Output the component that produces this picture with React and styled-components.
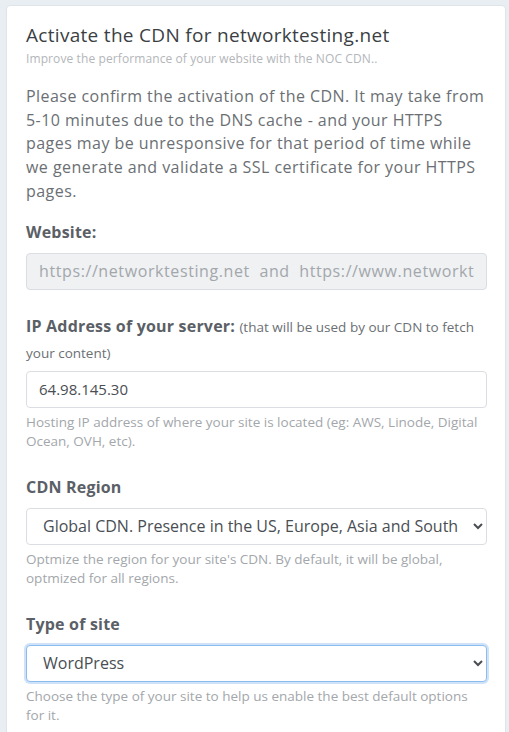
import React from "react";
import styled, { createGlobalStyle } from "styled-components";

const GlobalStyle = createGlobalStyle`
  body {
    margin: 0;
    background: #e9eef2;
    font-family: "Open Sans", "Liberation Sans", sans-serif;
  }
`;

const Page = styled.div`
  padding: 5px 3px 0 6px;
  height: 732px;
  box-sizing: border-box;
  overflow: hidden;
`;

const Card = styled.div`
  background: #fff;
  border: 1px solid #dfe4e8;
  border-radius: 4px;
  padding: 15px 18px 20px 19px;
  min-height: 760px;
`;

const Title = styled.h2`
  margin: 0;
  font-size: 19px;
  font-weight: 400;
  letter-spacing: 0.3px;
  color: #3b3f44;
  line-height: 28px;
`;

const Subtitle = styled.div`
  font-size: 12px;
  letter-spacing: 0.1px;
  color: #b3b6ba;
  line-height: 20px;
  margin-bottom: 16px;
`;

const Intro = styled.p`
  margin: 0 0 16px;
  font-size: 16px;
  letter-spacing: 0.45px;
  line-height: 23.7px;
  color: #6b6f74;
`;

const NoWrap = styled.span`
  white-space: nowrap;
`;

const Field = styled.div`
  margin-bottom: 24px;
`;

const Label = styled.label`
  display: block;
  font-size: 16px;
  font-weight: 700;
  letter-spacing: 0.2px;
  color: #5b6067;
  line-height: ${(p) => (p.tight ? 25 : 24)}px;
  margin-bottom: ${(p) => (p.tight ? 5 : 9)}px;
`;

const LabelNote = styled.span`
  font-size: 13.5px;
  font-weight: 400;
  letter-spacing: 0;
  color: #6b6f74;
`;

const Input = styled.input`
  display: block;
  width: 100%;
  box-sizing: border-box;
  height: 37px;
  padding: 0 12px;
  font-family: inherit;
  font-size: ${(p) => p.size || 15}px;
  letter-spacing: ${(p) => p.spacing || 0}px;
  color: #4a4e53;
  background: #fff;
  border: 1px solid #dadde1;
  border-radius: 4px;
  outline: none;
  &:disabled {
    background: #eff1f3;
    -webkit-text-fill-color: #a3a7ab;
    color: #a3a7ab;
    opacity: 1;
  }
`;

const Select = styled.select`
  display: block;
  width: 100%;
  box-sizing: border-box;
  height: 37px;
  padding: 0 10px 0 12px;
  font-family: inherit;
  font-size: 16px;
  color: #4a4e53;
  background: #fff;
  border: 1px solid ${(p) => (p.focused ? "#8bbcf0" : "#dadde1")};
  border-radius: 4px;
  outline: none;
  box-shadow: ${(p) => (p.focused ? "0 0 0 2px #cfe2f8" : "none")};
`;

const Help = styled.div`
  margin-top: 5px;
  font-size: 13.5px;
  line-height: 19px;
  color: #a3a7ab;
`;

export default function App() {
  return (
    <>
      <GlobalStyle />
      <Page>
        <Card>
          <Title>Activate the CDN for networktesting.net</Title>
          <Subtitle>Improve the performance of your website with the NOC CDN..</Subtitle>
          <Intro>
            Please confirm the activation of the CDN. It may take from <NoWrap>5-10</NoWrap> minutes
            due to the DNS cache - and your HTTPS pages may be unresponsive for that
            period of time while we generate and validate a SSL certificate for your
            HTTPS pages.
          </Intro>

          <Field>
            <Label>Website:</Label>
            <Input
              disabled
              size={16}
              spacing={0.6}
              value="https://networktesting.net  and  https://www.networktesting.net"
              readOnly
            />
          </Field>

          <Field>
            <Label tight>
              IP Address of your server: <LabelNote>(that will be used by our CDN to fetch your content)</LabelNote>
            </Label>
            <Input size={15} defaultValue="64.98.145.30" />
            <Help>Hosting IP address of where your site is located (eg: AWS, Linode, Digital Ocean, OVH, etc).</Help>
          </Field>

          <Field>
            <Label>CDN Region</Label>
            <Select defaultValue="global">
              <option value="global">Global CDN. Presence in the US, Europe, Asia and South America</option>
              <option value="us">US only</option>
            </Select>
            <Help>Optmize the region for your site's CDN. By default, it will be global, optmized for all regions.</Help>
          </Field>

          <Field>
            <Label>Type of site</Label>
            <Select focused defaultValue="wp">
              <option value="wp">WordPress</option>
              <option value="other">Other</option>
            </Select>
            <Help>Choose the type of your site to help us enable the best default options for it.</Help>
          </Field>
        </Card>
      </Page>
    </>
  );
}
